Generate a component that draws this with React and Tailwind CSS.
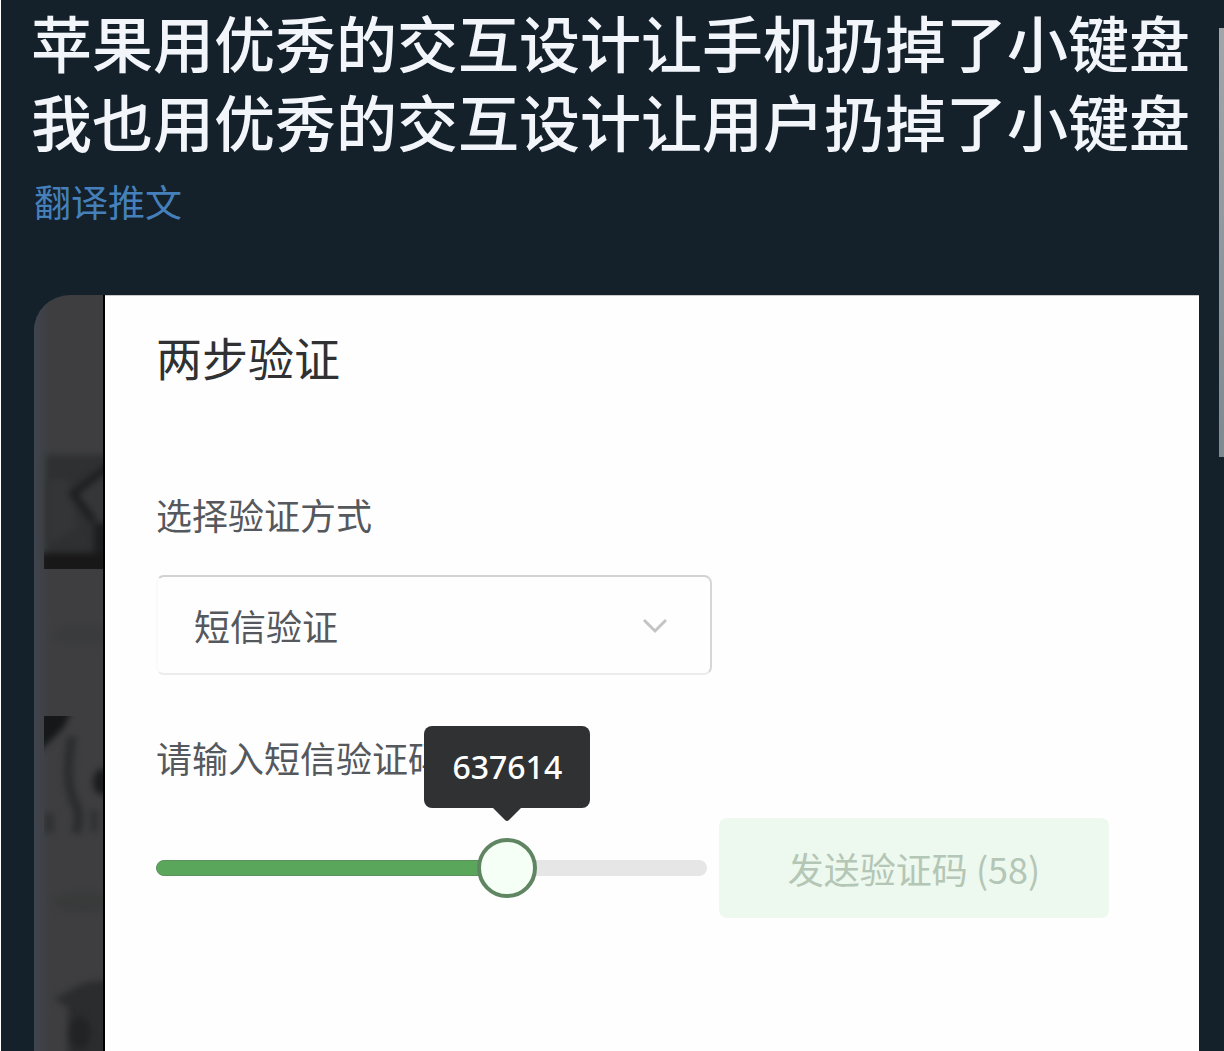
import React, { useState } from 'react';

const MAX_CODE = 999999;

function Backdrop() {
	return (
		<div className="w-[71px] shrink-0 overflow-hidden rounded-tl-[36px] border-r-2 border-black bg-[#3e3e41]">
			<svg className="block" width="71" height="756" viewBox="0 0 71 756" aria-hidden="true">
				<defs>
					<filter id="soft" x="-40%" y="-40%" width="180%" height="180%" colorInterpolationFilters="sRGB">
						<feGaussianBlur stdDeviation="3" />
					</filter>
					<linearGradient id="edge" x1="0" x2="1">
						<stop offset="0" stopColor="#3f454e" />
						<stop offset="1" stopColor="#3e3e41" />
					</linearGradient>
					<clipPath id="first">
						<rect x="10" y="154" width="61" height="120" />
					</clipPath>
					<clipPath id="second">
						<rect x="10" y="421" width="61" height="124" />
					</clipPath>
				</defs>
				<rect width="16" height="756" fill="url(#edge)" />
				<rect x="12" y="160" width="66" height="108" fill="#2f3031" filter="url(#soft)" />
				<g clipPath="url(#first)">
					<g filter="url(#soft)">
						<path d="M14 184 L34 184 L44 232 L14 250 Z" fill="#343537" />
						<path d="M40 198 L66 172 L80 172 L80 230 L62 230 Z" fill="#353637" />
						<path d="M76 170 L39 199 L60 226" fill="none" stroke="#1d1e1f" strokeWidth="7" />
						<rect x="60" y="228" width="20" height="34" fill="#1c1d1e" />
						<rect x="6" y="258" width="74" height="30" fill="#181818" />
					</g>
				</g>
				<ellipse cx="50" cy="340" rx="30" ry="8" fill="#3a3b3c" filter="url(#soft)" />
				<g clipPath="url(#second)">
					<g filter="url(#soft)">
						<path d="M0 410 L40 410 L30 432 L0 462 Z" fill="#151719" />
						<path d="M38 442 Q30 484 40 506 Q48 520 42 538" fill="none" stroke="#2b2c2e" strokeWidth="9" />
						<ellipse cx="68" cy="487" rx="9" ry="13" fill="#1c1d1f" />
						<rect x="10" y="518" width="10" height="20" fill="#313234" />
						<rect x="56" y="515" width="8" height="22" fill="#313234" />
					</g>
				</g>
				<ellipse cx="50" cy="607" rx="30" ry="10" fill="#393a3a" filter="url(#soft)" />
				<path d="M20 704 L50 688 L80 684 L80 770 L34 770 L34 712 Z" fill="#2b2c2d" filter="url(#soft)" />
				<ellipse cx="46" cy="738" rx="10" ry="16" fill="#222324" filter="url(#soft)" />
			</svg>
		</div>
	);
}

function CodeSlider() {
	const [code, setCode] = useState(637614);
	const percent = `${(code / MAX_CODE) * 100}%`;

	return (
		<div className="relative h-4 min-w-0 flex-1 rounded-full bg-[#e6e6e6]">
			<div
				className="h-4 rounded-full border border-[#5b915d] bg-[#5aa75c]"
				style={{ width: percent }}
			/>
			<div
				className="absolute top-1/2 size-[60px] -translate-x-1/2 -translate-y-1/2 rounded-full border-4 border-[#5f8562] bg-[#f6fff6]"
				style={{ left: percent }}
			/>
			<div
				className="absolute bottom-[68px] flex h-[82px] w-[166px] -translate-x-1/2 items-center justify-center rounded-lg bg-[#303133] font-['Noto_Sans'] text-[32px] font-medium text-white"
				style={{ left: percent }}
			>
				{code}
				<svg className="absolute top-full" width="28" height="13" viewBox="0 0 28 13" aria-hidden="true">
					<path d="M0 0 H28 L16 12 Q14 14 12 12 Z" fill="#303133" />
				</svg>
			</div>
			<input
				id="code"
				type="range"
				min="0"
				max={MAX_CODE}
				value={code}
				onChange={(e) => setCode(Number(e.target.value))}
				className="absolute -inset-x-2 -inset-y-6 cursor-pointer opacity-0"
			/>
		</div>
	);
}

function VerifyForm() {
	return (
		<form className="min-w-0 flex-1 border-t border-[#c9cacc] bg-[#fefefe] pt-7 pr-[90px] pl-[51px] text-4xl text-[#55585c]">
			<h2 className="text-[46px] leading-[64px] text-[#303133]">两步验证</h2>

			<label htmlFor="method" className="mt-[100px] block leading-[52px]">
				选择验证方式
			</label>
			<div className="relative mt-[35px] w-[556px] max-w-full">
				<select
					id="method"
					className="block h-[100px] w-full appearance-none rounded-lg border-2 border-t-[#d2d2d2] border-r-[#d6d6d6] border-b-[#ececec] border-l-[#fafafa] bg-transparent pr-20 pl-9"
				>
					<option>短信验证</option>
				</select>
				<svg
					className="pointer-events-none absolute top-[43px] right-[44px]"
					width="26"
					height="16"
					viewBox="0 0 26 16"
					fill="none"
					stroke="#c3c4c6"
					strokeWidth="3"
					aria-hidden="true"
				>
					<path d="M2 2 L13 13 L24 2" />
				</svg>
			</div>

			<label htmlFor="code" className="mt-14 block leading-[52px]">
				请输入短信验证码
			</label>
			<div className="mt-[35px] flex items-center gap-3">
				<CodeSlider />
				<button
					type="button"
					disabled
					className="h-[100px] w-[390px] shrink-0 rounded-lg bg-[#edf8ee] text-[#b4c6b5]"
				>
					发送验证码 (58)
				</button>
			</div>
		</form>
	);
}

export default function App() {
	return (
		<div className="flex min-h-screen border-l border-white bg-[#14202a] font-['Noto_Sans_CJK_SC',sans-serif]">
			<main className="flex min-w-0 flex-1 flex-col pt-0.5">
				<p className="pl-[30px] text-[61px] leading-[79px] font-medium text-[#f2f5fa]">
					苹果用优秀的交互设计让手机扔掉了小键盘
					<br />
					我也用优秀的交互设计让用户扔掉了小键盘
				</p>
				<a href="#translate" className="mt-[15px] ml-[33px] self-start text-[37px] leading-[52px] text-[#4580ba]">
					翻译推文
				</a>
				<section className="mt-17 mr-5 ml-[33px] flex flex-1">
					<Backdrop />
					<VerifyForm />
				</section>
			</main>
			<div className="mt-7 h-[429px] w-[5px] bg-linear-to-b from-[#a3a6a9] to-[#7f8990]" />
		</div>
	);
}
